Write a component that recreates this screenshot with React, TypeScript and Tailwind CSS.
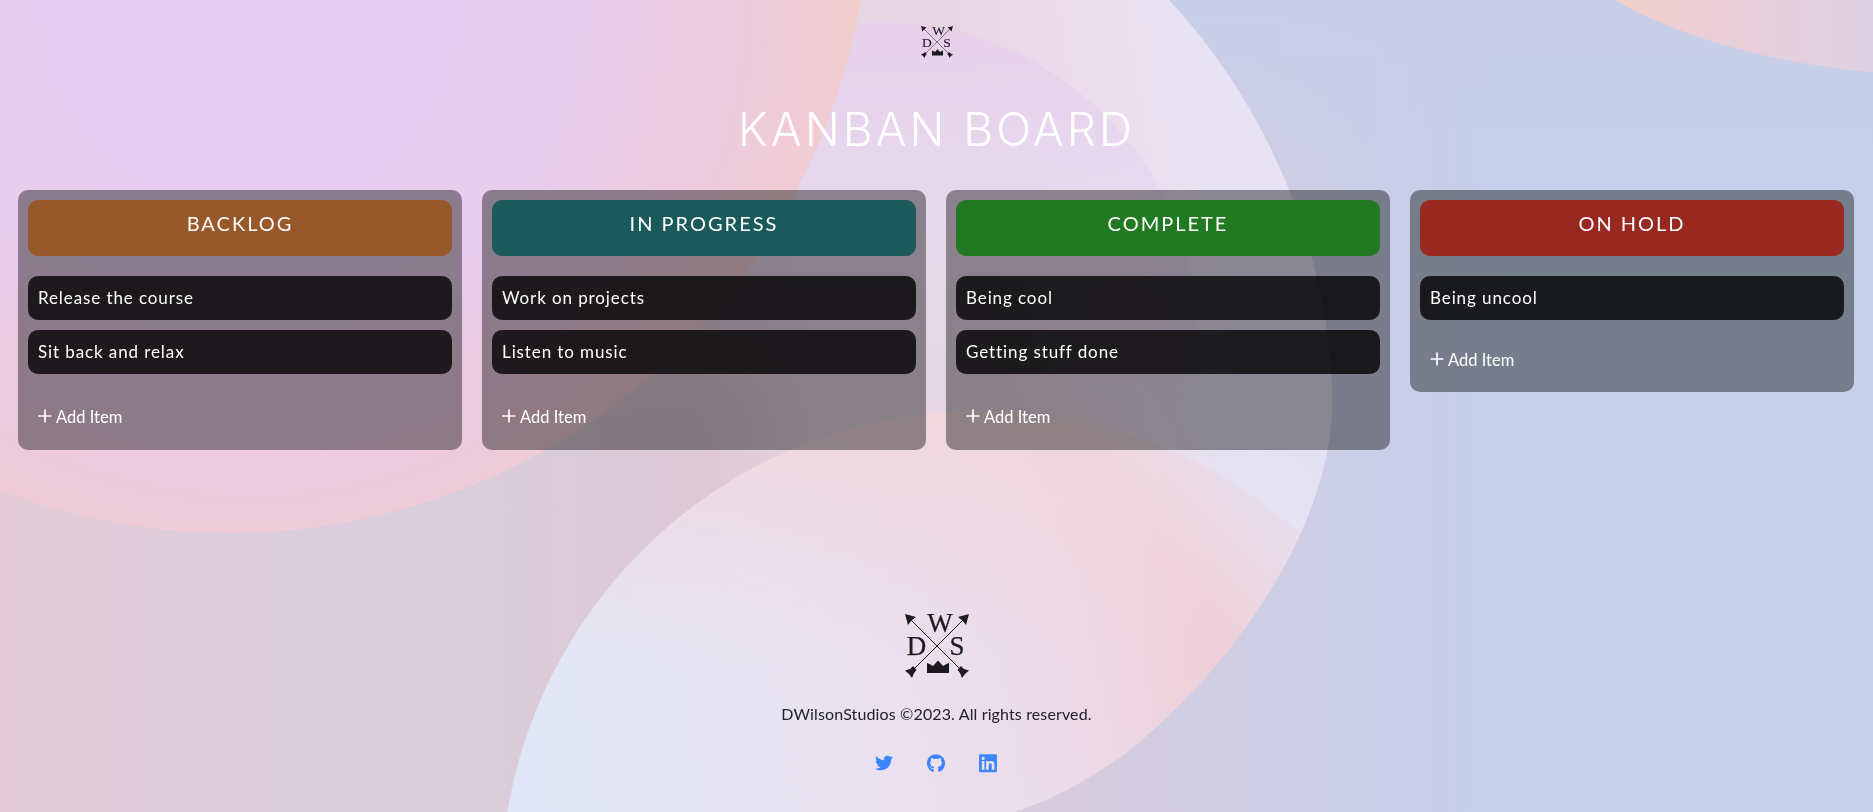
import React from 'react';
import { Plus } from 'lucide-react';
import { FaTwitter, FaGithub, FaLinkedin } from 'react-icons/fa';

const columns = [
  { title: 'BACKLOG', color: 'bg-[#98592a]', items: ['Release the course', 'Sit back and relax'] },
  { title: 'IN PROGRESS', color: 'bg-[#1a5a5a]', items: ['Work on projects', 'Listen to music'] },
  { title: 'COMPLETE', color: 'bg-[#217a22]', items: ['Being cool', 'Getting stuff done'] },
  { title: 'ON HOLD', color: 'bg-[#992820]', items: ['Being uncool'] },
];

function Logo({ className }: { className: string }) {
  return (
    <svg viewBox="0 -8 64 72" className={className} fill="#1c1a1e">
      <g stroke="#1c1a1e" strokeWidth="1" fill="none">
        <path d="M3 3 L58 58" />
        <path d="M61 3 L6 58" />
      </g>
      <path d="M0 0 L11 3 L6.5 6.5 L3 11 Z" />
      <path d="M64 0 L53 3 L57.5 6.5 L61 11 Z" />
      <path d="M0 56.5 L5 55 L8 52 L11.5 56 L9 59 L7 64 L4 60 Z" />
      <path d="M64 56.5 L59 55 L56 52 L52.5 56 L55 59 L57 64 L60 60 Z" />
      <path d="M22 59 L22 49 L24.5 50 L28 52 L33 46.5 L38 52 L41.5 50 L44 49 L44 59 Z" />
      <g fontSize="27" fontFamily="'Liberation Serif', serif" textAnchor="middle" stroke="#1c1a1e" strokeWidth="0.25">
        <text x="35" y="18">W</text>
        <text x="11.5" y="41">D</text>
        <text x="52" y="41">S</text>
      </g>
    </svg>
  );
}

function Background() {
  const blob = 'M1169 0 C1290 130 1332 290 1332 400 C1333 520 1240 660 1130 750 C1090 780 1050 800 1015 812 L0 812 L0 0 Z';
  return (
    <svg viewBox="0 0 1873 812" preserveAspectRatio="none" className="fixed inset-0 -z-10 w-full h-full">
      <defs>
        <linearGradient id="base" x1="0" y1="0" x2="1" y2="0">
          <stop offset="0" stopColor="#e4ccd8" />
          <stop offset="0.22" stopColor="#d9cddc" />
          <stop offset="0.4" stopColor="#dfc8d4" />
          <stop offset="0.6" stopColor="#d4cce0" />
          <stop offset="0.8" stopColor="#c5d0ea" />
          <stop offset="1" stopColor="#c5d0ea" />
        </linearGradient>
        <linearGradient id="topRight" x1="0" y1="0" x2="0" y2="1">
          <stop offset="0" stopColor="#c7cfe8" stopOpacity="1" />
          <stop offset="0.6" stopColor="#c7cfe8" stopOpacity="0" />
        </linearGradient>
        <radialGradient id="pink" gradientUnits="userSpaceOnUse" cx="250" cy="0" r="620">
          <stop offset="0" stopColor="#e6ccf5" />
          <stop offset="0.55" stopColor="#e8cdec" />
          <stop offset="0.8" stopColor="#eecbdc" />
          <stop offset="0.95" stopColor="#f0ccd2" />
          <stop offset="1" stopColor="#f1d0c6" />
        </radialGradient>
        <linearGradient id="big" gradientUnits="userSpaceOnUse" x1="700" y1="400" x2="1300" y2="300">
          <stop offset="0" stopColor="#e6d6e2" stopOpacity="0" />
          <stop offset="0.2" stopColor="#e6d6e2" />
          <stop offset="0.5" stopColor="#e6d6e2" />
          <stop offset="0.7" stopColor="#ecdcec" />
          <stop offset="0.9" stopColor="#e7e3f4" />
        </linearGradient>
        <linearGradient id="lav" gradientUnits="userSpaceOnUse" x1="0" y1="30" x2="0" y2="420">
          <stop offset="0" stopColor="#e8d0ea" />
          <stop offset="0.45" stopColor="#e6d8f0" stopOpacity="0.8" />
          <stop offset="1" stopColor="#e6d8f0" stopOpacity="0" />
        </linearGradient>
        <linearGradient id="bottom" gradientUnits="userSpaceOnUse" x1="500" y1="800" x2="1300" y2="650">
          <stop offset="0" stopColor="#dfe6f6" />
          <stop offset="0.35" stopColor="#e8e4f3" />
          <stop offset="0.65" stopColor="#ecdcea" />
          <stop offset="0.9" stopColor="#eecfd8" />
        </linearGradient>
        <linearGradient id="bottomTop" gradientUnits="userSpaceOnUse" x1="0" y1="420" x2="0" y2="660">
          <stop offset="0" stopColor="#f0d6dc" stopOpacity="0.9" />
          <stop offset="1" stopColor="#f0d6dc" stopOpacity="0" />
        </linearGradient>
        <linearGradient id="glow" gradientUnits="userSpaceOnUse" x1="1320" y1="470" x2="1180" y2="570">
          <stop offset="0" stopColor="#e3e2f3" />
          <stop offset="1" stopColor="#e3e2f3" stopOpacity="0" />
        </linearGradient>
        <linearGradient id="corner" gradientUnits="userSpaceOnUse" x1="1615" y1="0" x2="1873" y2="0">
          <stop offset="0" stopColor="#f2d0c6" />
          <stop offset="0.3" stopColor="#ecced4" />
          <stop offset="1" stopColor="#dfd0e4" />
        </linearGradient>
        <clipPath id="blobClip">
          <path d={blob} />
        </clipPath>
      </defs>
      <rect width="1873" height="812" fill="url(#base)" />
      <rect x="1100" width="773" height="300" fill="url(#topRight)" />
      <path d="M1615 0 C1680 38 1780 65 1873 72 L1873 0 Z" fill="url(#corner)" />
      <path d={blob} fill="url(#big)" />
      <circle cx="880" cy="340" r="318" fill="url(#lav)" />
      <circle cx="230" cy="-107" r="640" fill="url(#pink)" />
      <g clipPath="url(#blobClip)">
        <circle cx="980" cy="890" r="479" fill="url(#bottom)" />
        <circle cx="980" cy="890" r="479" fill="url(#bottomTop)" />
        <rect x="1000" y="380" width="340" height="432" fill="url(#glow)" />
      </g>
    </svg>
  );
}

function Column({ title, color, items }: { title: string; color: string; items: string[] }) {
  return (
    <div className="bg-black/40 rounded-[10px] p-[10px]">
      <h2 className={`${color} rounded-[10px] h-[56px] pb-[10px] flex items-center justify-center text-white text-[20px] tracking-[2px]`}>
        {title}
      </h2>
      <ul className="mt-[20px] flex flex-col gap-[10px]">
        {items.map((item) => (
          <li key={item} className="bg-black/80 rounded-[10px] h-[44px] flex items-center px-[10px] text-white text-[17px] tracking-[0.9px]">
            {item}
          </li>
        ))}
      </ul>
      <div className={`${items.length > 1 ? 'h-[66px] pt-[32px]' : 'h-[62px] pt-[29px]'} pl-[7px] flex items-start text-white text-[16.5px]`}>
        <Plus size={20} strokeWidth={2} className="mr-[1px]" />
        <span className="leading-[22px]">Add Item</span>
      </div>
    </div>
  );
}

export default function App() {
  return (
    <div className="min-h-screen flex flex-col items-center font-['Lato',sans-serif]">
      <Background />
      <Logo className="w-[32px] h-[36px] mt-[22px]" />
      <h1 className="mt-[42px] text-[46px] leading-[58px] font-light font-['Inter',sans-serif] text-white tracking-[3px]">KANBAN BOARD</h1>
      <div className="w-full mt-[32px] pl-[18px] pr-[19px] grid grid-cols-4 gap-[20px] items-start">
        {columns.map((c) => (
          <Column key={c.title} {...c} />
        ))}
      </div>
      <footer className="mt-[156px] flex flex-col items-center">
        <Logo className="w-[64px] h-[72px]" />
        <p className="mt-[24px] text-[16px] leading-[24px] text-[#22222a] tracking-[0.13px]">DWilsonStudios ©2023. All rights reserved.</p>
        <div className="mt-[28px] pr-[2px] flex gap-[34px] text-[#3a86ff]">
          <span className="w-[18px] h-[18px] flex items-center justify-center text-[18px]"><FaTwitter /></span>
          <span className="w-[18px] h-[18px] flex items-center justify-center text-[18.6px]"><FaGithub /></span>
          <span className="w-[18px] h-[18px] flex items-center justify-center text-[20.5px]"><FaLinkedin /></span>
        </div>
      </footer>
    </div>
  );
}
